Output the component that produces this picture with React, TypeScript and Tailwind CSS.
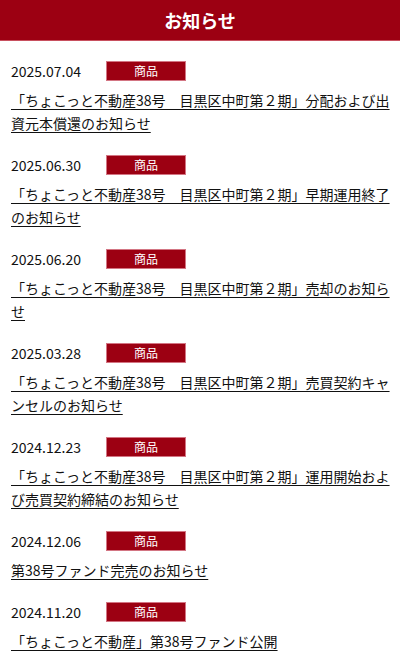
import React from "react";

const items = [
  { date: "2025.07.04", title: "「ちょこっと不動産38号　目黒区中町第２期」分配および出資元本償還のお知らせ" },
  { date: "2025.06.30", title: "「ちょこっと不動産38号　目黒区中町第２期」早期運用終了のお知らせ" },
  { date: "2025.06.20", title: "「ちょこっと不動産38号　目黒区中町第２期」売却のお知らせ" },
  { date: "2025.03.28", title: "「ちょこっと不動産38号　目黒区中町第２期」売買契約キャンセルのお知らせ" },
  { date: "2024.12.23", title: "「ちょこっと不動産38号　目黒区中町第２期」運用開始および売買契約締結のお知らせ" },
  { date: "2024.12.06", title: "第38号ファンド完売のお知らせ" },
  { date: "2024.11.20", title: "「ちょこっと不動産」第38号ファンド公開" },
];

export default function App() {
  return (
    <div
      className="w-[400px] min-h-[655px] bg-white text-[#111]"
      style={{ fontFamily: '"Noto Sans CJK JP", "Noto Sans", sans-serif' }}
    >
      <header className="h-[41px] bg-[#9c0012] flex items-center justify-center border-b border-[#c8505f]">
        <h1 className="text-white text-[18px] font-bold leading-none">お知らせ</h1>
      </header>
      <ul className="pl-[11px] pr-[6px]">
        {items.map((it) => (
          <li key={it.date} className="pt-[20px]">
            <div className="flex items-center h-[20px]">
              <span className="w-[95px] text-[14px] leading-[20px]">{it.date}</span>
              <span className="w-[80px] h-[20px] bg-[#9c0012] border border-[#d37583] text-white text-[12px] leading-[18px] flex items-center justify-center">
                商品
              </span>
            </div>
            <p className="mt-[8px] text-[14px] leading-[23px]">
              <a href="#" className="underline underline-offset-[3px] decoration-[#111]">
                {it.title}
              </a>
            </p>
          </li>
        ))}
      </ul>
    </div>
  );
}
